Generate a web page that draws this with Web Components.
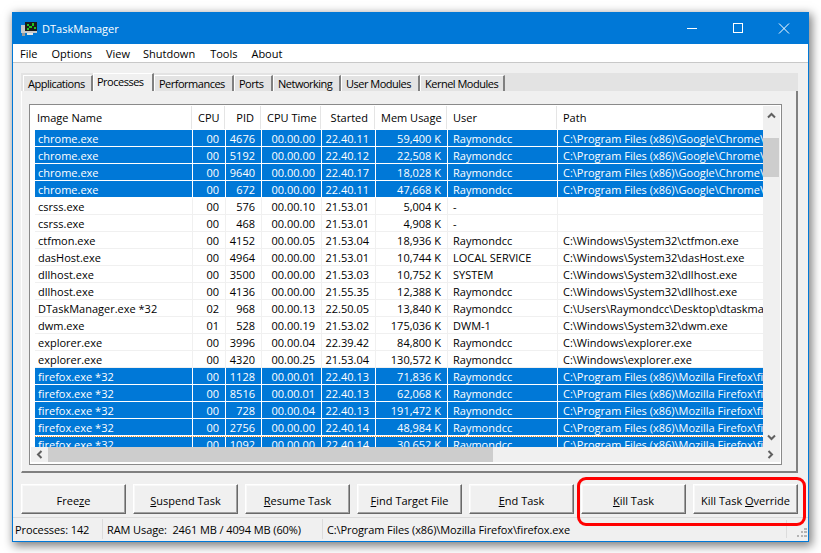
<!doctype html>
<html>
<head>
<meta charset="utf-8">
<title>DTaskManager</title>
<style>
  html, body { margin: 0; background: #fff; }
  body { font: 11px "Open Sans", "Noto Sans", sans-serif; color: #000; padding: 12px 0 0 12px; height: 541px; overflow: hidden; }
</style>
</head>
<body>
<d-window title="DTaskManager">
  <d-menubar>
    <span style="margin-left:7px">File</span>
    <span style="margin-left:14px">Options</span>
    <span style="margin-left:14px">View</span>
    <span style="margin-left:13px">Shutdown</span>
    <span style="margin-left:15px">Tools</span>
    <span style="margin-left:14px">About</span>
  </d-menubar>
  <d-tabs>
    <d-tab w="70">Applications</d-tab>
    <d-tab w="61" active>Processes</d-tab>
    <d-tab w="80">Performances</d-tab>
    <d-tab w="39">Ports</d-tab>
    <d-tab w="68">Networking</d-tab>
    <d-tab w="79">User Modules</d-tab>
    <d-tab w="85">Kernel Modules</d-tab>
  </d-tabs>
  <d-panel>
    <d-listview>
      <d-row selected cells="chrome.exe|00|4676|00.00.00|22.40.11|59,400 K|Raymondcc|C:\Program Files (x86)\Google\Chrome\Application\chrome.exe"></d-row>
      <d-row selected cells="chrome.exe|00|5192|00.00.00|22.40.12|22,508 K|Raymondcc|C:\Program Files (x86)\Google\Chrome\Application\chrome.exe"></d-row>
      <d-row selected cells="chrome.exe|00|9640|00.00.00|22.40.17|18,028 K|Raymondcc|C:\Program Files (x86)\Google\Chrome\Application\chrome.exe"></d-row>
      <d-row selected cells="chrome.exe|00|672|00.00.00|22.40.11|47,668 K|Raymondcc|C:\Program Files (x86)\Google\Chrome\Application\chrome.exe"></d-row>
      <d-row cells="csrss.exe|00|576|00.00.10|21.53.01|5,004 K|-|"></d-row>
      <d-row cells="csrss.exe|00|468|00.00.00|21.53.01|4,908 K|-|"></d-row>
      <d-row cells="ctfmon.exe|00|4152|00.00.05|21.53.04|18,936 K|Raymondcc|C:\Windows\System32\ctfmon.exe"></d-row>
      <d-row cells="dasHost.exe|00|4964|00.00.00|21.53.01|10,744 K|LOCAL SERVICE|C:\Windows\System32\dasHost.exe"></d-row>
      <d-row cells="dllhost.exe|00|3500|00.00.00|21.53.03|10,752 K|SYSTEM|C:\Windows\System32\dllhost.exe"></d-row>
      <d-row cells="dllhost.exe|00|4136|00.00.00|21.55.35|12,388 K|Raymondcc|C:\Windows\System32\dllhost.exe"></d-row>
      <d-row cells="DTaskManager.exe *32|02|968|00.00.13|22.50.05|13,840 K|Raymondcc|C:\Users\Raymondcc\Desktop\dtaskmanager\DTaskManager.exe"></d-row>
      <d-row cells="dwm.exe|01|528|00.00.19|21.53.02|175,036 K|DWM-1|C:\Windows\System32\dwm.exe"></d-row>
      <d-row cells="explorer.exe|00|3996|00.00.04|22.39.42|84,800 K|Raymondcc|C:\Windows\explorer.exe"></d-row>
      <d-row cells="explorer.exe|00|4320|00.00.25|21.53.04|130,572 K|Raymondcc|C:\Windows\explorer.exe"></d-row>
      <d-row selected cells="firefox.exe *32|00|1128|00.00.01|22.40.13|71,836 K|Raymondcc|C:\Program Files (x86)\Mozilla Firefox\firefox.exe"></d-row>
      <d-row selected cells="firefox.exe *32|00|8516|00.00.01|22.40.13|62,068 K|Raymondcc|C:\Program Files (x86)\Mozilla Firefox\firefox.exe"></d-row>
      <d-row selected cells="firefox.exe *32|00|728|00.00.04|22.40.13|191,472 K|Raymondcc|C:\Program Files (x86)\Mozilla Firefox\firefox.exe"></d-row>
      <d-row selected cells="firefox.exe *32|00|2756|00.00.00|22.40.14|48,984 K|Raymondcc|C:\Program Files (x86)\Mozilla Firefox\firefox.exe"></d-row>
      <d-row selected focused cells="firefox.exe *32|00|1092|00.00.00|22.40.14|30,652 K|Raymondcc|C:\Program Files (x86)\Mozilla Firefox\firefox.exe"></d-row>
    </d-listview>
  </d-panel>
  <d-buttons>
    <d-button>Free<u>z</u>e</d-button>
    <d-button><u>S</u>uspend Task</d-button>
    <d-button><u>R</u>esume Task</d-button>
    <d-button><u>F</u>ind Target File</d-button>
    <d-button><u>E</u>nd Task</d-button>
    <d-button><u>K</u>ill Task</d-button>
    <d-button>Kill Task <u>O</u>verride</d-button>
  </d-buttons>
  <d-statusbar>
    <span style="width:88px;padding-left:0">Processes: 142</span>
    <span style="width:220px">RAM Usage:&nbsp; 2461 MB / 4094 MB (60%)</span>
    <span style="width:464px;border:0">C:\Program Files (x86)\Mozilla Firefox\firefox.exe</span>
  </d-statusbar>
  <d-callout></d-callout>
</d-window>

<script>
  // header column widths, rows are indented 4px so the first one is shorter
  var HEAD_COLS = '161px 33px 36px 60px 54px 72px 110px 206px';
  var ROW_COLS = '158px 33px 36px 60px 54px 72px 110px 205px';
  var ALIGN_RIGHT = [1, 2, 3, 4, 5];

  function define(name, css, html, init) {
    customElements.define(name, class extends HTMLElement {
      constructor() {
        super();
        var root = this.attachShadow({mode: 'open'});
        root.innerHTML = '<style>' + css + '</style>' + (typeof html === 'function' ? html(this) : html);
      }
      connectedCallback() {
        if (init) init(this);
      }
    });
  }

  define('d-window', `
    :host { display: flex; flex-direction: column; position: relative; box-sizing: border-box; width: 797px; height: 530px;
      border: 1px solid #0078d7; background: #f0f0f0; box-shadow: 2px 3px 9px 1px rgba(0,0,0,.5); }
    .title { display: flex; align-items: center; height: 31px; flex: none; background: #0078d7; color: #fff; }
    .logo { margin: 0 5px 0 8px; }
    .name { flex: 1; }
    .ctl { display: flex; width: 46px; height: 31px; align-items: center; justify-content: center; }
  `, function (el) {
    return `<div class="title">
      <svg class="logo" width="16" height="16" viewBox="0 0 16 16" shape-rendering="crispEdges">
        <rect x="0" y="4" width="16" height="8" fill="#c8c8c8"/>
        <rect x="4" y="1" width="12" height="9" fill="#1a1a1a"/>
        <rect x="6" y="3" width="2" height="2" fill="#22c422"/><rect x="8" y="5" width="3" height="2" fill="#22c422"/>
        <rect x="11" y="2" width="2" height="3" fill="#22c422"/><rect x="13" y="6" width="2" height="2" fill="#22c422"/>
        <rect x="6" y="7" width="2" height="2" fill="#22c422"/>
        <rect x="1" y="12" width="3" height="3" fill="#9a9a9a"/><rect x="6" y="12" width="6" height="2" fill="#e8e8e8"/>
      </svg>
      <span class="name">${el.getAttribute('title')}</span>
      <span class="ctl"><svg width="12" height="12"><path d="M1 5.5H11" stroke="#fff"/></svg></span>
      <span class="ctl"><svg width="12" height="12"><rect x="1.5" y=".5" width="9" height="9" fill="none" stroke="#fff"/></svg></span>
      <span class="ctl" style="margin-right:1px"><svg width="12" height="12"><path d="M1 .5L11 10.5M11 .5L1 10.5" stroke="#fff"/></svg></span>
    </div><slot></slot>`;
  });

  define('d-menubar', `
    :host { display: flex; align-items: center; flex: none; height: 18px; background: #fff; border-bottom: 1px solid #c8c8c8; }
  `, '<slot></slot>');

  define('d-tabs', `
    :host { display: flex; flex: none; height: 18px; margin: 10px 10px 0 8px; padding-left: 2px; background: #e3e3e3; letter-spacing: -.5px; }
  `, '<slot></slot>');

  define('d-tab', `
    :host { display: block; box-sizing: border-box; margin-top: 2px; height: 16px; line-height: 16px; padding-left: 4px; white-space: nowrap;
      border-left: 1px solid #fff; border-top: 1px solid #fff; border-right: 2px solid #808080; }
    :host([active]) { margin-top: 0; height: 18px; background: #f0f0f0; padding-left: 3px; line-height: 15px; }
  `, '<slot></slot>', function (el) {
    el.style.width = el.getAttribute('w') + 'px';
  });

  define('d-panel', `
    :host { display: block; box-sizing: border-box; flex: none; height: 382px; margin: 0 10px 0 8px; padding: 13px 14px 0 7px;
      border-left: 1px solid #fff; border-right: 2px solid #808080; border-bottom: 2px solid #808080; }
  `, '<slot></slot>');

  define('d-listview', `
    :host { display: grid; box-sizing: border-box; height: 361px; border: 1px solid #8a8a8a; padding: 1px; background: #fff;
      grid-template-columns: 732px 17px; grid-template-rows: 23px 318px 15px 1px; }
    .head { display: grid; grid-template-columns: ${HEAD_COLS}; }
    .head span { box-sizing: border-box; line-height: 23px; padding: 0 6px; border-right: 1px solid #e5e5e5; white-space: nowrap; }
    .head .r { text-align: right; }
    .head span:last-child { border: 0; }
    .rows { overflow: hidden; padding: 1px 0 0 4px; }
    .vbar { grid-column: 2; grid-row: 1 / 3; background: #f0f0f0; position: relative; display: flex; flex-direction: column; align-items: center; justify-content: space-between; padding: 0 1px 0 0; }
    .vbar svg { flex: none; margin: 6px 0; }
    .vthumb { position: absolute; left: 0; width: 16px; top: 32px; height: 39px; background: #cdcdcd; }
    .hbar { grid-column: 1 / 3; background: #f0f0f0; position: relative; display: flex; align-items: center; justify-content: space-between; padding: 0 6px 0 5px; width: 749px; box-sizing: border-box; }
    .hthumb { position: absolute; left: 17px; width: 445px; top: 0; height: 15px; background: #cdcdcd; }
  `, `<div class="head">
      <span style="padding-left:6px">Image Name</span><span class="r">CPU</span><span class="r">PID</span><span class="r">CPU Time</span><span class="r">Started</span><span class="r">Mem Usage</span><span>User</span><span>Path</span>
    </div>
    <div class="vbar" style="grid-row:1 / 3">
      <svg width="9" height="7"><path d="M1 5.5L4.5 2L8 5.5" fill="none" stroke="#606060" stroke-width="2"/></svg>
      <div class="vthumb"></div>
      <svg width="9" height="7"><path d="M1 1.5L4.5 5L8 1.5" fill="none" stroke="#606060" stroke-width="2"/></svg>
    </div>
    <div class="rows"><slot></slot></div>
    <div class="hbar">
      <svg width="7" height="9"><path d="M5.5 1L2 4.5L5.5 8" fill="none" stroke="#606060" stroke-width="2"/></svg>
      <div class="hthumb"></div>
      <svg width="7" height="9"><path d="M1.5 1L5 4.5L1.5 8" fill="none" stroke="#606060" stroke-width="2"/></svg>
    </div>`);

  define('d-row', `
    :host { display: grid; grid-template-columns: ${ROW_COLS}; height: 17px; box-sizing: border-box; border-bottom: 1px solid #f0f0f0; position: relative; }
    :host([selected]) { background: #0078d7; color: #fff; border-bottom-color: #fff; }
    span { box-sizing: border-box; line-height: 18px; padding-left: 3px; border-right: 1px solid #f0f0f0; overflow: hidden; white-space: nowrap; }
    :host([selected]) span { border-right-color: #fff; }
    span.r { text-align: right; padding: 0 6px 0 0; }
    span.p { padding-left: 5px; border: 0; }
    span.u { padding-left: 5px; }
    .focus { position: absolute; left: 0; right: 0; top: 0; height: 1px; background: repeating-linear-gradient(90deg, #ff9a2e 0 1px, #fff 1px 2px); }
  `, function (el) {
    var out = el.getAttribute('cells').split('|').map(function (c, i) {
      var cls = ALIGN_RIGHT.indexOf(i) >= 0 ? 'r' : i === 6 ? 'u' : i === 7 ? 'p' : '';
      return '<span class="' + cls + '">' + c + '</span>';
    }).join('');
    return out + (el.hasAttribute('focused') ? '<div class="focus"></div>' : '');
  });

  define('d-buttons', `
    :host { display: flex; flex: none; gap: 7px; margin: 11px 0 0 8px; }
  `, '<slot></slot>');

  define('d-button', `
    :host { display: block; box-sizing: border-box; width: 105px; height: 30px; line-height: 31px; text-align: center; background: #f0f0f0; white-space: nowrap;
      border: 1px solid; border-color: #fff #696969 #696969 #fff; box-shadow: inset -1px -1px 0 #a0a0a0, inset 1px 1px 0 #f8f8f8; }
  `, '<slot></slot>');

  define('d-statusbar', `
    :host { display: flex; position: relative; flex: none; height: 22px; margin-top: 3px; border-top: 1px solid #dcdcdc; box-sizing: border-box; padding-left: 2px; letter-spacing: -.1px; }
    .grip { position: absolute; right: 1px; bottom: 1px; }
    .end { position: absolute; right: 21px; top: 2px; bottom: 1px; border-left: 1px solid #dcdcdc; }
    ::slotted(span) { box-sizing: border-box; flex: none; padding-left: 4px; white-space: nowrap; border-right: 1px solid #dcdcdc; margin-top: 1px; line-height: 22px; }
  `, `<slot></slot><div class="end"></div>
    <svg class="grip" width="10" height="10" shape-rendering="crispEdges" fill="#b4b4b4">
      <rect x="7" y="0" width="3" height="2"/><rect x="4" y="3" width="2" height="2"/><rect x="7" y="3" width="3" height="2"/>
      <rect x="0" y="7" width="2" height="2"/><rect x="4" y="7" width="2" height="2"/><rect x="7" y="7" width="3" height="2"/>
    </svg>`);

  // red marker drawn over the screenshot
  define('d-callout', `
    :host { position: absolute; left: 564px; top: 464px; width: 229px; height: 49px; box-sizing: border-box; border: 3px solid #f00; border-radius: 9px; pointer-events: none; }
  `, '');
</script>
</body>
</html>
